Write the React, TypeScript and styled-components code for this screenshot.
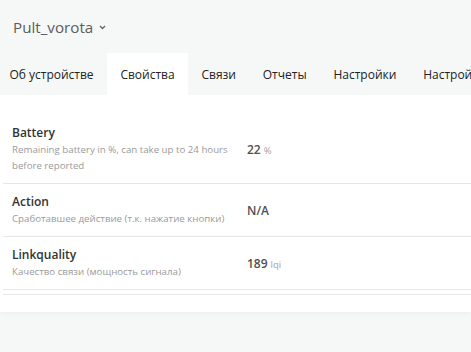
import React from 'react';
import styled, { createGlobalStyle } from 'styled-components';

const GlobalStyle = createGlobalStyle`
  html, body {
    margin: 0;
    padding: 0;
    background: #f6f8f8;
    font-family: "Open Sans", "Noto Sans", sans-serif;
    overflow: hidden;
  }
`;

const Page = styled.div`
  width: 471px;
  height: 352px;
  overflow: hidden;
  background: #f6f8f8;
`;

const Header = styled.div`
  height: 53px;
  display: flex;
  align-items: center;
  padding-left: 13px;
  color: #5c5c5c;
  font-size: 15.2px;
  box-sizing: border-box;
`;

const Caret = styled.svg`
  margin-left: 6px;
  margin-top: 2px;
`;

const Tabs = styled.div`
  display: flex;
  height: 42px;
  margin-left: -4px;
  white-space: nowrap;
`;

const Tab = styled.div<{ $active?: boolean }>`
  display: flex;
  align-items: center;
  padding: 0 13.4px;
  font-size: 12px;
  color: #222;
  background: ${p => (p.$active ? '#ffffff' : 'transparent')};
`;

const Card = styled.div`
  background: #fff;
  padding-top: 20px;
  height: 217px;
  box-sizing: border-box;
  box-shadow: 0 2px 4px rgba(0, 0, 0, 0.03);
`;

const Row = styled.div`
  display: flex;
  align-items: center;
  padding: 9px 12px 9px 9px;
  margin-left: 3px;
  border-bottom: 1px solid #e6e6e6;
`;

const Info = styled.div`
  width: 235px;
  flex-shrink: 0;
`;

const Title = styled.div`
  font-size: 12px;
  font-weight: 600;
  line-height: 18px;
  color: #333;
`;

const Desc = styled.div`
  font-size: 9.7px;
  line-height: 16px;
  color: #9a9a9a;
`;

const Value = styled.div`
  font-size: 12px;
  font-weight: 600;
  color: #505050;
`;

const Unit = styled.span`
  font-size: 9.5px;
  font-weight: 400;
  color: #a3a3a3;
  margin-left: 3px;
`;

const Footer = styled.div`
  margin-left: 3px;
  margin-top: 4px;
  border-top: 1px solid #e6e6e6;
`;

const rows = [
  {
    title: 'Battery',
    desc: ['Remaining battery in %, can take up to 24 hours', 'before reported'],
    value: '22',
    unit: '%',
  },
  {
    title: 'Action',
    desc: ['Сработавшее действие (т.к. нажатие кнопки)'],
    value: 'N/A',
  },
  {
    title: 'Linkquality',
    desc: ['Качество связи (мощность сигнала)'],
    value: '189',
    unit: 'lqi',
  },
];

function App() {
  return (
    <Page>
      <GlobalStyle />
      <Header>
        Pult_vorota
        <Caret width="7" height="5" viewBox="0 0 7 5">
          <path d="M1 1 L3.5 3.5 L6 1" fill="none" stroke="#666" strokeWidth="1.4" />
        </Caret>
      </Header>
      <Tabs>
        <Tab>Об устройстве</Tab>
        <Tab $active>Свойства</Tab>
        <Tab>Связи</Tab>
        <Tab>Отчеты</Tab>
        <Tab>Настройки</Tab>
        <Tab>Настройки (специфичные)</Tab>
      </Tabs>
      <Card>
        {rows.map(r => (
          <Row key={r.title}>
            <Info>
              <Title>{r.title}</Title>
              {r.desc.map(d => (
                <Desc key={d}>{d}</Desc>
              ))}
            </Info>
            <Value>
              {r.value}
              {r.unit && <Unit>{r.unit}</Unit>}
            </Value>
          </Row>
        ))}
        <Footer />
      </Card>
    </Page>
  );
}

export default App;
